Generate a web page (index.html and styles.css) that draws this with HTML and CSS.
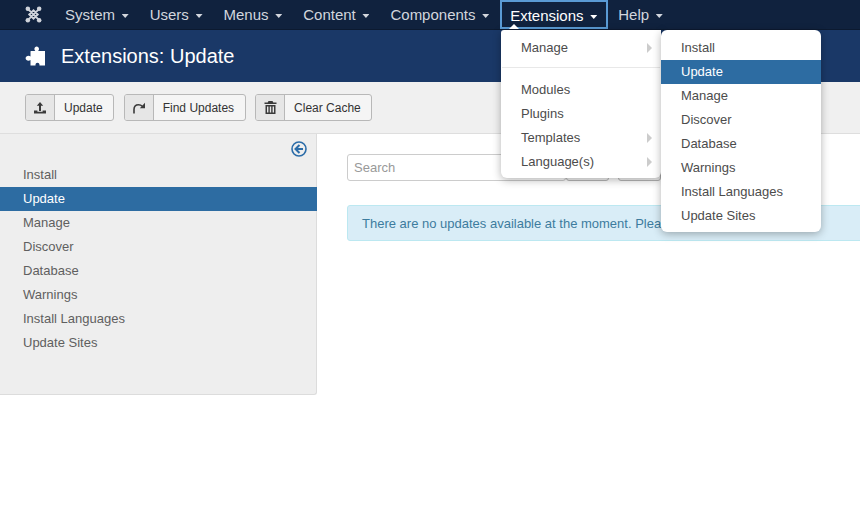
FILE: index.html
```html
<!DOCTYPE html>
<html lang="en">
<head>
<meta charset="utf-8">
<title>Extensions: Update</title>
<link rel="stylesheet" href="styles.css">
</head>
<body>
<nav class="navbar">
  <a class="logo" href="#"><svg width="17" height="17" viewBox="0 0 18 18"><g fill="none" stroke="#cfd3da" stroke-width="2"><path d="M3.500 3.500l11 11M14.500 3.500l-11 11M4.500 9L9 4.500 13.500 9 9 13.500z"/></g><g fill="#cfd3da"><circle cx="3" cy="3" r="2.400"/><circle cx="15" cy="3" r="2.400"/><circle cx="3" cy="15" r="2.400"/><circle cx="15" cy="15" r="2.400"/></g></svg></a>
  <ul class="menu">
    <li class="item">System <span class="caret"></span></li>
    <li class="item">Users <span class="caret"></span></li>
    <li class="item">Menus <span class="caret"></span></li>
    <li class="item">Content <span class="caret"></span></li>
    <li class="item">Components <span class="caret"></span></li>
    <li class="item active">Extensions <span class="caret"></span></li>
    <li class="item">Help <span class="caret"></span></li>
  </ul>
</nav>
<header class="title-bar">
  <svg class="puzzle" width="20" height="20" viewBox="0 0 20 20"><path fill="#fff" d="M6 5h4.300c-.6-.7-.9-1.300-.9-2C9.400 1.600 10.500.6 11.700.6S14 1.600 14 3c0 .7-.3 1.300-.9 2H20v14.500h-5.500v-.8c0-1.200-.9-2-2-2s-2 .8-2 2v.8H5.500V14c-.7.500-1.300.700-2 .700C2 14.700.6 13.600.6 12.200S2 9.700 3.500 9.700c.7 0 1.300.2 2 .7V5.500c0-.3.200-.5.500-.5z"/></svg>
  <h1 class="page-title">Extensions: Update</h1>
</header>
<div class="toolbar">
  <button class="tool"><span class="tool-icon"><svg width="14" height="13" viewBox="0 0 14 13"><path fill="#3a3a3a" d="M7 1l3.200 3.800H8V10H6V4.800H3.800zM1 9.500h3.400v1.300h5.200V9.500H13V12.500H1z"/></svg></span><span class="tool-label">Update</span></button>
  <button class="tool"><span class="tool-icon"><svg width="14" height="14" viewBox="0 0 14 14"><path fill="none" stroke="#3a3a3a" stroke-width="1.600" d="M2 12.500V8.500C2 5.500 4 3.700 6.500 3.700c1.500 0 2.800.5 3.700 1.500"/><path fill="#3a3a3a" d="M13 1.800v5.400H7.800z"/></svg></span><span class="tool-label">Find Updates</span></button>
  <button class="tool"><span class="tool-icon"><svg width="13" height="13" viewBox="0 0 13 13"><path fill="#3a3a3a" d="M4.500 0h4l.8 1.500h3.200V3H.5V1.500h3.200zM1.500 4h10v9h-10zM3 5.500v6h1.400v-6zm2.800 0v6h1.400v-6zm2.800 0v6H10v-6z"/></svg></span><span class="tool-label">Clear Cache</span></button>
</div>
<div class="content">
  <aside class="sidebar">
    <div class="collapse"><svg width="16" height="16" viewBox="0 0 16 16"><circle cx="8" cy="8" r="7" fill="none" stroke="#2b6ca8" stroke-width="1.600"/><path fill="none" stroke="#2b6ca8" stroke-width="2" d="M8.500 4L4.500 8l4 4M5 8h7"/></svg></div>
    <ul class="side-list">
      <li class="side-item">Install</li>
      <li class="side-item current">Update</li>
      <li class="side-item">Manage</li>
      <li class="side-item">Discover</li>
      <li class="side-item">Database</li>
      <li class="side-item">Warnings</li>
      <li class="side-item">Install Languages</li>
      <li class="side-item">Update Sites</li>
    </ul>
  </aside>
  <main class="main">
    <div class="filters">
      <input class="search" type="text" placeholder="Search">
      <span class="mini-btn"></span>
      <span class="mini-btn"></span>
    </div>
    <div class="alert">There are no updates available at the moment. Please check again later.</div>
  </main>
</div>
<ul class="dropdown first">
  <li class="dd-item has-sub">Manage</li>
  <li class="divider"></li>
  <li class="dd-item">Modules</li>
  <li class="dd-item">Plugins</li>
  <li class="dd-item has-sub">Templates</li>
  <li class="dd-item has-sub">Language(s)</li>
</ul>
<ul class="dropdown second">
  <li class="dd-item">Install</li>
  <li class="dd-item selected">Update</li>
  <li class="dd-item">Manage</li>
  <li class="dd-item">Discover</li>
  <li class="dd-item">Database</li>
  <li class="dd-item">Warnings</li>
  <li class="dd-item">Install Languages</li>
  <li class="dd-item">Update Sites</li>
</ul>
</body>
</html>
```
FILE: styles.css
```css
* { box-sizing: border-box; }
html, body { margin: 0; height: 529px; overflow: hidden; }
body { background: #fff; font-family: "Liberation Sans", Arial, sans-serif; font-size: 13px; color: #515151; position: relative; }
ul { list-style: none; margin: 0; padding: 0; }

.navbar { height: 30px; background: #10223e; border-bottom: 1px solid #0c1a30; display: flex; align-items: flex-start; }
.logo { width: 54.500px; padding: 6px 0 0 25px; display: block; height: 29px; flex: none; }
.menu { display: flex; }
.item { height: 29px; padding: 0 10.500px; line-height: 30px; font-size: 15px; color: #d2d6dd; white-space: nowrap; }
.item.active { color: #fff; border: 2px solid #5a9bd5; line-height: 27px; padding: 0 8.500px; position: relative; }
.item.active::after { content: ""; position: absolute; left: 7px; bottom: -2px; border: 5px solid transparent; border-top: 0; border-bottom-color: #fff; z-index: 3; }
.caret { display: inline-block; width: 7px; height: 4px; margin-left: 2.500px; vertical-align: middle; background: currentColor; clip-path: polygon(0 0, 100% 0, 50% 100%); }

.title-bar { height: 52px; background: #1a3867; display: flex; align-items: center; padding-left: 25px; }
.puzzle { flex: none; }
.page-title { margin: 0 0 0 16px; font-size: 20px; font-weight: 400; color: #fff; line-height: 24px; }

.toolbar { height: 52px; background: #f0f0f0; border-bottom: 1px solid #dedede; padding: 12px 25px 0; display: flex; gap: 9.500px; align-items: flex-start; }
.tool { display: flex; height: 27px; padding: 0; background: #f5f5f5; border: 1px solid #b8b8b8; border-radius: 3px; font: 12px "Liberation Sans", Arial, sans-serif; color: #333; align-items: stretch; }
.tool-icon { width: 29px; background: #e6e6e6; border-right: 1px solid #b8b8b8; border-radius: 2px 0 0 2px; display: flex; align-items: center; justify-content: center; }
.tool-label { padding: 0 10.500px 0 9px; line-height: 26px; }

.content { display: flex; align-items: flex-start; }
.sidebar { width: 317px; height: 261px; background: #eee; border-right: 1px solid #dcdcdc; border-bottom: 1px solid #dcdcdc; border-radius: 0 0 3px 0; flex: none; }
.collapse { height: 29px; padding: 7px 9px 0 0; display: flex; justify-content: flex-end; }
.side-item { height: 24px; line-height: 24px; padding-left: 23px; color: #5f5f5f; }
.side-item.current { background: #2d6ca2; color: #fff; margin-right: -1px; position: relative; }
.main { flex: 1; padding: 20px 0 0 30px; min-width: 0; overflow: hidden; }
.filters { display: flex; height: 27px; }
.search { width: 219px; height: 27px; padding: 0 6px; border: 1px solid #ccc; border-radius: 3px; background: #fff; font: 13px "Liberation Sans", Arial, sans-serif; flex: none; }
.search::placeholder { color: #999; opacity: 1; }
.mini-btn { flex: none; width: 43px; height: 27px; border: 1px solid #b8b8b8; border-radius: 3px; background: #f5f5f5; }
.mini-btn + .mini-btn { margin-left: 9px; }
.alert { margin-top: 24px; height: 36px; width: 600px; padding: 0 14px; line-height: 35px; background: #d9edf7; border: 1px solid #bce8f1; border-radius: 3px; color: #3d7c9e; white-space: nowrap; }

.dropdown { position: absolute; top: 30px; background: #fff; border-radius: 6px; box-shadow: 0 2px 8px rgba(0,0,0,.3); z-index: 2; }
.dropdown.first { left: 501px; width: 160px; height: 148px; padding-top: 6px; border-radius: 3px 0 6px 6px; }
.dropdown.second { left: 661px; width: 160px; height: 202px; padding-top: 6px; }
.dd-item { height: 24px; line-height: 24px; padding-left: 20px; color: #4c4c4c; position: relative; }
.dd-item.selected { background: #2d6ca2; color: #fff; }
.has-sub::after { content: ""; position: absolute; right: 9px; top: 7px; border: 5px solid transparent; border-right: 0; border-left-color: #ccc; }
.divider { height: 1px; margin: 7px 1px 10px; background: #e8e8e8; }
```
